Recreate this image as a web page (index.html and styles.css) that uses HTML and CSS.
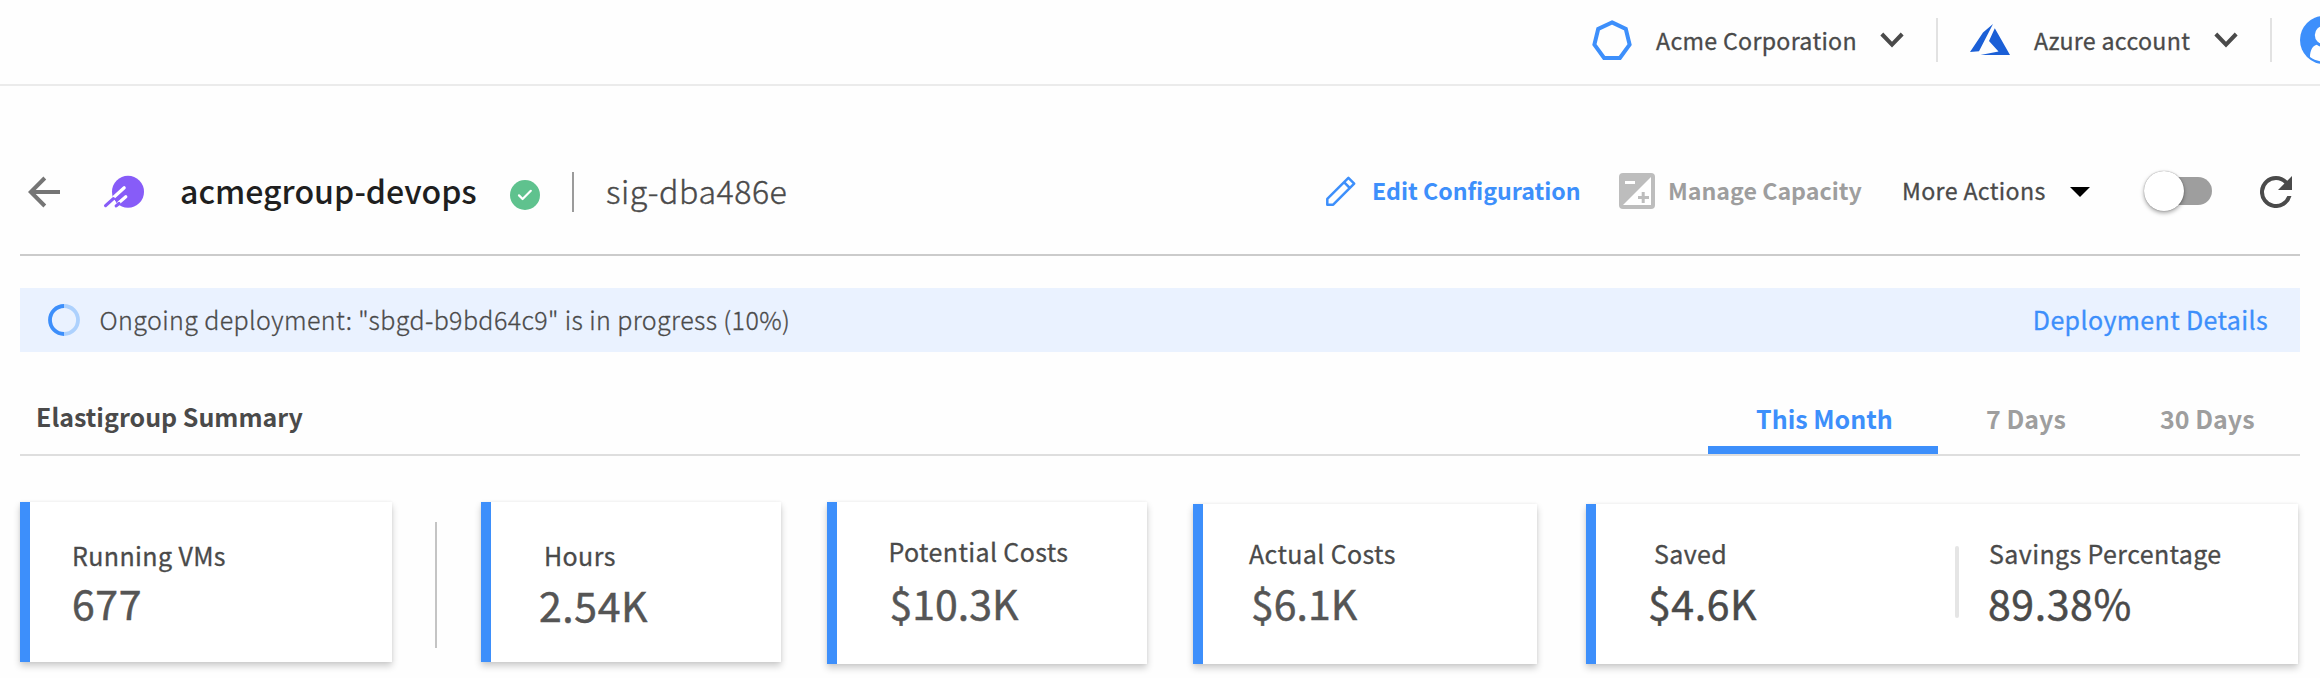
FILE: index.html
```html
<!DOCTYPE html>
<html lang="en">
<head>
<meta charset="utf-8">
<title>acmegroup-devops</title>
<link rel="stylesheet" href="styles.css">
</head>
<body>
<header class="topbar">
  <svg class="org-icon" width="40" height="42" viewBox="0 0 40 42"><path d="M20 3.4 33.8 10 37.6 25.6 27.9 39 H12.1 L2.4 25.6 6.2 10Z" fill="none" stroke="#3d8ffb" stroke-width="4"/></svg>
  <span class="text-md org-name">Acme Corporation</span>
  <svg class="chevron" width="24" height="16" viewBox="0 0 24 16"><path d="M1.8 2 12 12.6 22.2 2" fill="none" stroke="#4a4a4a" stroke-width="4"/></svg>
  <i class="sep sep-org"></i>
  <svg class="azure-icon" width="40" height="32" viewBox="0 0 40 32"><path d="M23 0 13 8.6 0 28 9 27.3Z M24.8 4.3 40 31 H10.5 L28.5 27.6 19 17Z" fill="#1b5fd6"/></svg>
  <span class="text-md account-name">Azure account</span>
  <svg class="chevron" width="24" height="16" viewBox="0 0 24 16"><path d="M1.8 2 12 12.6 22.2 2" fill="none" stroke="#4a4a4a" stroke-width="4"/></svg>
  <i class="sep sep-account"></i>
  <svg class="avatar" width="48" height="48" viewBox="0 0 48 48"><circle cx="24" cy="24" r="24" fill="#3d8ffb"/><circle cx="24" cy="19" r="9.2" fill="#fff"/><path d="M10 41C10 34 13 29.3 16.8 28.8 21 31.8 27 31.8 31.2 28.8 35 29.3 38 34 38 41 30 47 18 47 10 41Z" fill="#fff"/></svg>
</header>
<main class="page">
  <section class="group-header">
    <svg width="32" height="32" viewBox="0 0 32 32" class="back"><path d="M16.8 2 2.8 16 16.8 30M3 16H32" fill="none" stroke="#757575" stroke-width="4"/></svg>
    <svg class="group-logo" width="42" height="36" viewBox="0 0 42 36"><circle cx="25" cy="17.8" r="16" fill="#875cf8"/><g fill="none" stroke-linecap="round"><path d="M11.3 22.8 21.2 13.8" stroke="#fff" stroke-width="3.2"/><path d="M15.8 28.8 22.8 22.8" stroke="#fff" stroke-width="3.2"/><path d="M10 26 11.8 28" stroke="#fff" stroke-width="2"/><path d="M2.6 31.6 10.4 24.6M13.2 31.9 16 29.5M13.6 25.8 16.6 23.2" stroke="#875cf8" stroke-width="3.2"/></g></svg>
    <h1 class="group-name">acmegroup-devops</h1>
    <svg class="status" width="30" height="30" viewBox="0 0 30 30"><circle cx="15" cy="15" r="15" fill="#5fc28e"/><path d="M9 15.4 12.6 19 20.8 10.8" fill="none" stroke="#fff" stroke-width="2.2" stroke-linecap="round" stroke-linejoin="round"/></svg>
    <i class="name-sep"></i>
    <span class="group-id">sig-dba486e</span>
    <svg class="pencil" width="30" height="30" viewBox="0 0 30 30"><path d="M1.3 28.7V22.8L22.4 1.8 28.2 7.6 7.2 28.7Z M18 6.2 23.8 12" fill="none" stroke="#3d8ffb" stroke-width="2.5" stroke-linejoin="round"/></svg>
    <span class="text-md strong edit">Edit Configuration</span>
    <svg class="capacity-icon" width="36" height="36" viewBox="0 0 36 36"><rect width="36" height="36" rx="4" fill="#bdbdbd"/><path d="M32 4V32H4Z M6 8H16V11H6Z" fill="#fff"/><path d="M22.7 19H25.7V23H30V26H25.7V30H22.7V26H19V23H22.7Z" fill="#bdbdbd"/></svg>
    <span class="text-md strong manage">Manage Capacity</span>
    <span class="text-md more">More Actions</span>
    <svg width="20" height="10" viewBox="0 0 20 10"><path d="M0 0H20L10 10Z" fill="#000"/></svg>
    <span class="toggle"><i class="knob"></i></span>
    <svg class="refresh" width="32" height="32" viewBox="4 4 16 16"><path d="M17.65 6.35A7.96 7.96 0 0 0 12 4a8 8 0 1 0 7.73 10h-2.08A6 6 0 1 1 12 6c1.66 0 3.14.69 4.22 1.78L13 11h7V4z" fill="#4a4a4a"/></svg>
  </section>
  <section class="banner">
    <svg width="32" height="32" viewBox="0 0 32 32"><g fill="none" stroke-width="3.8"><path d="M16 2A14 14 0 0 1 16 30" stroke="#add1fd"/><path d="M16 30A14 14 0 0 1 16 2" stroke="#3d8ffb"/></g></svg>
    <span class="text-lg banner-text">Ongoing deployment: "sbgd-b9bd64c9" is in progress (10%)</span>
    <a class="text-lg banner-link">Deployment Details</a>
  </section>
  <section class="summary">
    <h2 class="text-lg strong summary-title">Elastigroup Summary</h2>
    <nav class="tabs">
      <a class="text-lg strong tab active">This Month</a>
      <a class="text-lg strong tab week">7 Days</a>
      <a class="text-lg strong tab month">30 Days</a>
    </nav>
  </section>
  <section class="cards">
    <div class="card vms"><div class="text-lg">Running VMs</div><div class="value">677</div></div>
    <i class="cards-sep"></i>
    <div class="card hours"><div class="text-lg">Hours</div><div class="value">2.54K</div></div>
    <div class="card potential"><div class="text-lg">Potential Costs</div><div class="value">$10.3K</div></div>
    <div class="card actual"><div class="text-lg">Actual Costs</div><div class="value">$6.1K</div></div>
    <div class="card savings">
      <div class="saved"><div class="text-lg">Saved</div><div class="value">$4.6K</div></div>
      <i class="savings-sep"></i>
      <div class="percent"><div class="text-lg">Savings Percentage</div><div class="value">89.38%</div></div>
    </div>
  </section>
</main>
</body>
</html>
```
FILE: styles.css
```css
* { box-sizing: border-box; }
body {
  margin: 0;
  width: 2320px;
  height: 678px;
  overflow: hidden;
  background: #fefefe;
  color: #4a4a4a;
  font-family: "Noto Sans CJK SC", "Open Sans", sans-serif;
}
svg { display: block; flex: none; }
i { display: block; flex: none; }
h1, h2 { margin: 0; font-weight: 400; }

.text-md, .text-lg { font-weight: 400; white-space: nowrap; flex: none; -webkit-text-stroke: .3px currentColor; }
.text-md { font-size: 23.2px; line-height: 32px; letter-spacing: .3px; }
.text-lg { font-size: 25px; line-height: 34px; letter-spacing: .38px; }
.strong { font-weight: 700; letter-spacing: 0; -webkit-text-stroke: 0; }

/* Top bar */
.topbar {
  display: flex;
  align-items: center;
  height: 86px;
  padding: 0 0 4px 1592px;
  border-bottom: 2px solid #ebebeb;
  overflow: hidden;
}
.org-name { margin-left: 24px; width: 200px; }
.chevron { margin-left: 24px; }
.sep { width: 2px; height: 44px; background: #e2e2e2; }
.sep-org { margin: 0 32px; }
.account-name { margin-left: 24px; width: 156px; }
.sep-account { margin: 0 28px 0 32px; }

/* Page */
.page { padding: 0 20px; }
.group-header {
  display: flex;
  align-items: center;
  height: 170px;
  padding: 44px 0 0 8px;
  border-bottom: 2px solid #cbcbcb;
}
.group-logo { margin-left: 43px; }
.group-name, .group-id {
  flex: none;
  font-size: 32.1px;
  line-height: 44px;
  white-space: nowrap;
  margin-bottom: 4px;
}
.group-name { margin-left: 35px; width: 330px; color: #1f1f1f; font-weight: 500; }
.status { margin-top: 6px; }
.name-sep { margin-left: 32px; width: 2px; height: 40px; background: #9b9b9b; }
.group-id { margin-left: 32px; width: 720px; font-weight: 300; letter-spacing: .55px; -webkit-text-stroke: .4px currentColor; }
.group-header .text-md { margin-bottom: 4px; }
.pencil { margin-bottom: 2px; }
.edit { margin-left: 16px; width: 247px; color: #3d8ffb; }
.capacity-icon { margin-bottom: 2px; }
.manage { margin-left: 13px; width: 234px; color: #9e9e9e; }
.more { width: 168px; letter-spacing: .35px; }
.toggle {
  flex: none;
  display: flex;
  align-items: center;
  width: 68px;
  height: 28px;
  margin: 0 48px 2px 54px;
  background: linear-gradient(#9e9e9e, #9e9e9e) right / 56px 28px no-repeat;
  border-radius: 14px;
}
.knob {
  width: 40px;
  height: 40px;
  border-radius: 50%;
  background: #fff;
  box-shadow: 0 2px 4px rgba(0, 0, 0, .35), 0 0 1px rgba(0, 0, 0, .5);
}

/* Deployment banner */
.banner {
  display: flex;
  align-items: center;
  height: 64px;
  margin-top: 32px;
  padding: 0 32px 0 28px;
  background: #eaf2ff;
}
.banner-text { margin: 0 0 2px 19.5px; font-weight: 300; letter-spacing: .4px; }
.banner-link { margin: 0 0 2px auto; color: #3d8ffb; }

/* Summary header and tabs */
.summary {
  display: flex;
  align-items: flex-end;
  justify-content: space-between;
  height: 104px;
  border-bottom: 2px solid #dedede;
}
.summary-title { margin: 0 0 21px 16px; }
.tabs { display: flex; width: 592px; }
.tab { height: 53px; padding-left: 49px; color: #9e9e9e; }
.active { width: 230px; padding-left: 48px; border-bottom: 8px solid #3d8ffb; color: #3d8ffb; }
.week { width: 172px; padding-left: 48px; }
.month { padding-left: 50px; }

/* Metric cards */
.cards { display: flex; align-items: flex-start; padding-top: 46px; }
.card {
  flex: none;
  height: 160px;
  border-left: 10px solid #3d8ffb;
  background: #fff;
  box-shadow: 0 4px 7px rgba(0, 0, 0, .2), 0 0 3px rgba(0, 0, 0, .06);
}
.value { font-size: 41px; line-height: 50px; font-weight: 400; -webkit-text-stroke: .5px currentColor; letter-spacing: .6px; white-space: nowrap; color: #555; }
.vms { width: 372px; padding: 36px 0 0 42px; }
.vms .value { margin-top: 5px; }
.cards-sep { width: 2px; height: 126px; margin: 20px 44px 0 43px; background: #c4c4c4; }
.hours { width: 300px; padding: 36px 0 0 53px; }
.hours .value { margin: 7px 0 0 -5px; }
.potential { width: 320px; height: 162px; margin-left: 46px; padding: 32px 0 0 51.5px; }
.potential .value { margin: 9px 0 0 1px; letter-spacing: 0; }
.actual { width: 344px; margin: 2px 0 0 46px; padding: 32px 0 0 46px; }
.actual .value { margin: 7px 0 0 2px; letter-spacing: 0; }
.savings { display: flex; width: 712px; margin: 2px 0 0 49px; padding-top: 32px; }
.savings .value { margin-top: 7px; color: #4a4a4a; }
.saved { width: 359px; padding-left: 58px; }
.saved .value { margin-left: -6px; }
.savings-sep { width: 4px; height: 72px; margin-top: 10px; border-radius: 2px; background: #e5e5e5; }
.percent { padding-left: 30px; }
.percent .value { margin-left: -1px; }
```
